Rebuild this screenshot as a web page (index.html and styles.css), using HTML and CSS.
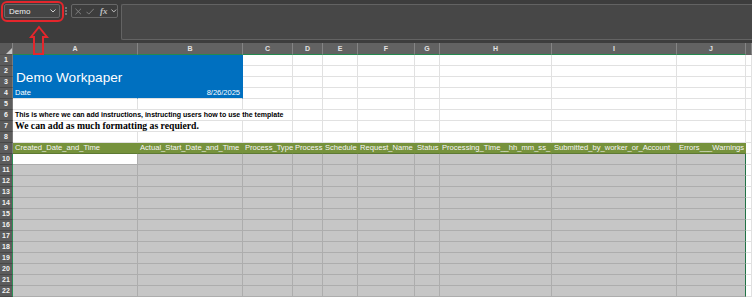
FILE: index.html
```html
<!DOCTYPE html>
<html lang="en">
<head>
  <meta charset="UTF-8">
  <title>Demo Workpaper</title>
  <link rel="stylesheet" href="styles.css">
</head>
<body>
  <div class="topbar">
    <div class="namebox">
      <span>Demo</span>
      <svg width="6" height="4" viewBox="0 0 6 4"><path d="M0.5 0.5 L3 3 L5.5 0.5" fill="none" stroke="#cfcfcf" stroke-width="1"/></svg>
    </div>
    <div class="grip">
      <svg width="2" height="8" viewBox="0 0 2 8"><circle cx="1" cy="1" r="0.8" fill="#bdbdbd"/><circle cx="1" cy="4" r="0.8" fill="#bdbdbd"/><circle cx="1" cy="7" r="0.8" fill="#bdbdbd"/></svg>
    </div>
    <div class="fxbox">
      <svg width="7" height="7" viewBox="0 0 7 7"><path d="M0.5 0.5 L6.5 6.5 M6.5 0.5 L0.5 6.5" stroke="#858585" stroke-width="1"/></svg>
      <svg width="9" height="7" viewBox="0 0 9 7"><path d="M0.5 3.8 L3 6.3 L8.5 0.5" fill="none" stroke="#858585" stroke-width="1"/></svg>
      <span class="fx">fx</span>
      <svg width="6" height="4" viewBox="0 0 6 4"><path d="M0.5 0.5 L3 3 L5.5 0.5" fill="none" stroke="#cfcfcf" stroke-width="1"/></svg>
    </div>
    <div class="formula"></div>
  </div>

  <!-- red highlight around the name box -->
  <div class="callout"></div>
  <svg class="arrow" width="20" height="32" viewBox="0 0 20 32">
    <polygon points="10,2 18,12 14,12 14,29 5,29 5,12 2,12" fill="none" stroke="#e4262c" stroke-width="2"/>
  </svg>

  <table class="sheet">
    <colgroup>
      <col style="width:13px"><col style="width:125px"><col style="width:105px"><col style="width:50px">
      <col style="width:30px"><col style="width:35px"><col style="width:57px"><col style="width:25px">
      <col style="width:112px"><col style="width:125px"><col style="width:69px"><col style="width:6px">
    </colgroup>
    <tr class="colhead">
      <th class="corner"><svg width="6" height="6" viewBox="0 0 6 6"><path d="M6 0 L6 6 L0 6 Z" fill="#c4c4c4"/></svg></th>
      <th>A</th><th>B</th><th>C</th><th>D</th><th>E</th><th>F</th><th>G</th><th>H</th><th>I</th><th>J</th><th class="off"></th>
    </tr>
    <tr><th class="rh">1</th><td class="banner" colspan="2" rowspan="3"><span class="title">Demo Workpaper</span></td><td></td><td></td><td></td><td></td><td></td><td></td><td></td><td></td><td></td></tr>
    <tr><th class="rh">2</th><td></td><td></td><td></td><td></td><td></td><td></td><td></td><td></td><td></td></tr>
    <tr><th class="rh">3</th><td></td><td></td><td></td><td></td><td></td><td></td><td></td><td></td><td></td></tr>
    <tr><th class="rh">4</th><td class="banner-cell">Date</td><td class="banner-cell right">8/26/2025</td><td></td><td></td><td></td><td></td><td></td><td></td><td></td><td></td><td></td></tr>
    <tr><th class="rh">5</th><td></td><td></td><td></td><td></td><td></td><td></td><td></td><td></td><td></td><td></td><td></td></tr>
    <tr><th class="rh">6</th><td class="note" colspan="3">This is where we can add instructions, instructing users how to use the template</td><td></td><td></td><td></td><td></td><td></td><td></td><td></td><td></td></tr>
    <tr><th class="rh">7</th><td class="note-serif" colspan="2">We can add as much formatting as requierd.</td><td></td><td></td><td></td><td></td><td></td><td></td><td></td><td></td><td></td></tr>
    <tr><th class="rh">8</th><td></td><td></td><td></td><td></td><td></td><td></td><td></td><td></td><td></td><td></td><td></td></tr>
    <tr>
      <th class="rh">9</th>
      <td class="hdr">Created_Date_and_Time</td><td class="hdr">Actual_Start_Date_and_Time</td><td class="hdr">Process_Type</td>
      <td class="hdr">Process</td><td class="hdr">Schedule</td><td class="hdr">Request_Name</td><td class="hdr">Status</td>
      <td class="hdr">Processing_Time__hh_mm_ss_</td><td class="hdr">Submitted_by_worker_or_Account</td><td class="hdr">Errors___Warnings</td><td></td>
    </tr>
    <tr><th class="rh sel">10</th><td class="active"></td><td class="sel"></td><td class="sel"></td><td class="sel"></td><td class="sel"></td><td class="sel"></td><td class="sel"></td><td class="sel"></td><td class="sel"></td><td class="sel last"></td><td></td></tr>
    <tr><th class="rh sel">11</th><td class="sel"></td><td class="sel"></td><td class="sel"></td><td class="sel"></td><td class="sel"></td><td class="sel"></td><td class="sel"></td><td class="sel"></td><td class="sel"></td><td class="sel last"></td><td></td></tr>
    <tr><th class="rh sel">12</th><td class="sel"></td><td class="sel"></td><td class="sel"></td><td class="sel"></td><td class="sel"></td><td class="sel"></td><td class="sel"></td><td class="sel"></td><td class="sel"></td><td class="sel last"></td><td></td></tr>
    <tr><th class="rh sel">13</th><td class="sel"></td><td class="sel"></td><td class="sel"></td><td class="sel"></td><td class="sel"></td><td class="sel"></td><td class="sel"></td><td class="sel"></td><td class="sel"></td><td class="sel last"></td><td></td></tr>
    <tr><th class="rh sel">14</th><td class="sel"></td><td class="sel"></td><td class="sel"></td><td class="sel"></td><td class="sel"></td><td class="sel"></td><td class="sel"></td><td class="sel"></td><td class="sel"></td><td class="sel last"></td><td></td></tr>
    <tr><th class="rh sel">15</th><td class="sel"></td><td class="sel"></td><td class="sel"></td><td class="sel"></td><td class="sel"></td><td class="sel"></td><td class="sel"></td><td class="sel"></td><td class="sel"></td><td class="sel last"></td><td></td></tr>
    <tr><th class="rh sel">16</th><td class="sel"></td><td class="sel"></td><td class="sel"></td><td class="sel"></td><td class="sel"></td><td class="sel"></td><td class="sel"></td><td class="sel"></td><td class="sel"></td><td class="sel last"></td><td></td></tr>
    <tr><th class="rh sel">17</th><td class="sel"></td><td class="sel"></td><td class="sel"></td><td class="sel"></td><td class="sel"></td><td class="sel"></td><td class="sel"></td><td class="sel"></td><td class="sel"></td><td class="sel last"></td><td></td></tr>
    <tr><th class="rh sel">18</th><td class="sel"></td><td class="sel"></td><td class="sel"></td><td class="sel"></td><td class="sel"></td><td class="sel"></td><td class="sel"></td><td class="sel"></td><td class="sel"></td><td class="sel last"></td><td></td></tr>
    <tr><th class="rh sel">19</th><td class="sel"></td><td class="sel"></td><td class="sel"></td><td class="sel"></td><td class="sel"></td><td class="sel"></td><td class="sel"></td><td class="sel"></td><td class="sel"></td><td class="sel last"></td><td></td></tr>
    <tr><th class="rh sel">20</th><td class="sel"></td><td class="sel"></td><td class="sel"></td><td class="sel"></td><td class="sel"></td><td class="sel"></td><td class="sel"></td><td class="sel"></td><td class="sel"></td><td class="sel last"></td><td></td></tr>
    <tr><th class="rh sel">21</th><td class="sel"></td><td class="sel"></td><td class="sel"></td><td class="sel"></td><td class="sel"></td><td class="sel"></td><td class="sel"></td><td class="sel"></td><td class="sel"></td><td class="sel last"></td><td></td></tr>
    <tr><th class="rh sel">22</th><td class="sel"></td><td class="sel"></td><td class="sel"></td><td class="sel"></td><td class="sel"></td><td class="sel"></td><td class="sel"></td><td class="sel"></td><td class="sel"></td><td class="sel last"></td><td></td></tr>
  </table>
</body>
</html>
```

FILE: styles.css
```css
body {
  margin: 0;
  width: 752px;
  height: 297px;
  overflow: hidden;
  position: relative;
  background: #3d3d3d;
  font-family: "Liberation Sans", Arial, sans-serif;
}

/* Formula bar */
.topbar {
  display: flex;
  align-items: flex-start;
  height: 43px;
  padding: 4px 0 0 4px;
  box-sizing: border-box;
}

.namebox {
  width: 56px;
  height: 14px;
  box-sizing: border-box;
  display: flex;
  align-items: center;
  justify-content: space-between;
  padding: 0 3px 0 4px;
  border: 1px solid #686868;
  border-radius: 2px;
  background: #444;
  color: #f0f0f0;
  font-size: 8px;
}

.grip {
  width: 11px;
  display: flex;
  justify-content: center;
  padding-top: 3px;
}

.fxbox {
  width: 47px;
  height: 14px;
  box-sizing: border-box;
  display: flex;
  align-items: center;
  gap: 4px;
  padding-left: 3px;
  border: 1px solid #686868;
  border-radius: 2px;
}

.fx {
  font-family: "Liberation Serif", serif;
  font-style: italic;
  font-weight: bold;
  font-size: 9px;
  color: #bdbdbd;
  margin-left: 2px;
}

.formula {
  flex: 1;
  height: 36px;
  margin-left: 3px;
  box-sizing: border-box;
  border: 1px solid #636363;
  border-right: none;
  border-radius: 2px 0 0 2px;
  background: #474747;
}

.callout {
  position: absolute;
  left: 1px;
  top: 1px;
  width: 59px;
  height: 17px;
  border: 2px solid #e4262c;
  border-radius: 6px;
}

.arrow {
  position: absolute;
  left: 29px;
  top: 25px;
}

/* Sheet grid */
.sheet {
  border-collapse: separate;
  border-spacing: 0;
  table-layout: fixed;
  width: 752px;
}

.sheet tr {
  height: 11px;
}

.sheet td {
  padding: 0 0 0 2px;
  height: 10px;
  line-height: 10px;
  font-size: 7.6px;
  white-space: nowrap;
  background: #fff;
  color: #000;
  border-right: 1px solid #e1e1e1;
  border-bottom: 1px solid #e1e1e1;
}

.colhead {
  height: 12px;
}

.colhead th {
  padding: 0;
  height: 11px;
  line-height: 11px;
  font-size: 7px;
  font-weight: bold;
  color: #e2e2e2;
  background: #626262;
  border-right: 1px solid #858585;
  border-bottom: 1px solid #24894f;
}

.colhead th.corner {
  background: #5a5a5a;
  border-bottom-color: #505050;
  text-align: right;
  vertical-align: bottom;
  line-height: 0;
}

.colhead th.off {
  border-bottom-color: #626262;
}

.rh {
  padding: 0;
  height: 10px;
  line-height: 10px;
  font-size: 7px;
  font-weight: bold;
  color: #f2f2f2;
  background: #5c5c5c;
  border-right: 1px solid #7a7a7a;
  border-bottom: 1px solid #484848;
}

.rh.sel {
  border-right-color: #2b9157;
}

.sheet td.banner,
.sheet td.banner-cell {
  background: #0070c0;
  border-color: #0070c0;
  color: #fff;
}

.sheet td.banner {
  vertical-align: bottom;
  padding: 0 0 2px 3px;
}

.title {
  display: block;
  font-size: 13.6px;
  line-height: 14px;
}

.sheet td.banner-cell {
  font-size: 7.5px;
  border-bottom-color: #e1e1e1;
}

.sheet td.right {
  text-align: right;
  padding-right: 2px;
}

.sheet td.note {
  font-size: 7px;
  font-weight: bold;
}

.sheet td.note-serif {
  font-family: "Liberation Serif", serif;
  font-size: 9.7px;
  font-weight: bold;
}

.sheet td.hdr {
  background: #76923c;
  color: #f6f6f6;
  border-right-color: #76923c;
  border-bottom-color: #5d7a33;
}

.sheet td.sel {
  background: #c6c6c6;
  border-color: #adadad;
}

.sheet td.active {
  border-bottom-color: #adadad;
  border-right-color: #adadad;
}

.sheet td.last {
  border-right: 1px solid #217346;
}
```
